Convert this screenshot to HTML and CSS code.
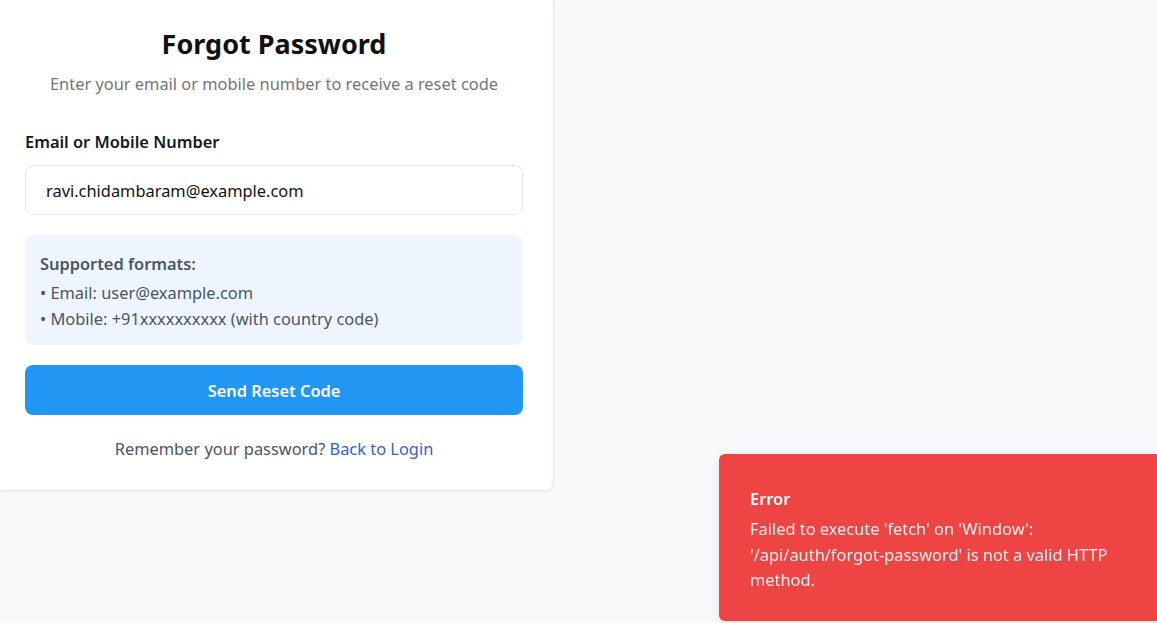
FILE: index.html
```html
<!DOCTYPE html>
<html lang="en">
<head>
<meta charset="utf-8">
<title>Forgot Password</title>
<link rel="stylesheet" href="styles.css">
</head>
<body>
<main class="page">
  <section class="card">
    <h1 class="title">Forgot Password</h1>
    <p class="subtitle">Enter your email or mobile number to receive a reset code</p>
    <form class="form">
      <label class="label" for="ident">Email or Mobile Number</label>
      <input class="input" id="ident" type="text" value="ravi.chidambaram@example.com">
      <div class="info">
        <p class="info-title">Supported formats:</p>
        <p class="info-line">• Email: user@example.com</p>
        <p class="info-line">• Mobile: +91xxxxxxxxxx (with country code)</p>
      </div>
      <button class="btn" type="button">Send Reset Code</button>
    </form>
    <p class="footer">Remember your password? <a class="link" href="#">Back to Login</a></p>
  </section>
</main>
<div class="toast" role="alert">
  <div class="toast-title">Error</div>
  <div class="toast-desc">Failed to execute 'fetch' on 'Window': '/api/auth/forgot-password' is not a valid HTTP method.</div>
</div>
</body>
</html>
```

FILE: styles.css
```css
* { box-sizing: border-box; }
html, body { margin: 0; padding: 0; }
body {
  background: #f8f9fb;
  font-family: "Noto Sans", "Open Sans", Roboto, sans-serif;
  font-size: 16.4px;
  color: #111827;
  width: 1157px;
  height: 623px;
  overflow: hidden;
}
.page {
  display: flex;
  align-items: flex-start;
}
.card {
  width: 560px;
  margin-left: -6px;
  margin-top: -5px;
  background: #fff;
  border: 1px solid #e5e7eb;
  border-radius: 8px;
  box-shadow: 0 1px 3px rgba(0,0,0,0.06);
  padding: 30px 30px 29px 30px;
}
.title {
  margin: 0;
  text-align: center;
  font-size: 27px;
  line-height: 36px;
  font-weight: 700;
  color: #111;
}
.subtitle {
  margin: 10px 0 0;
  text-align: center;
  font-size: 16.4px;
  line-height: 24px;
  color: #757575;
}
.form {
  display: flex;
  flex-direction: column;
  margin-top: 34px;
}
.label {
  font-size: 16.4px;
  line-height: 24px;
  font-weight: 600;
  color: #111827;
}
.input {
  margin-top: 11px;
  height: 50px;
  border: 1px solid #e5e7eb;
  border-radius: 8px;
  padding: 0 20px;
  font: inherit;
  font-size: 16.4px;
  color: #111;
  background: #fff;
  outline: none;
}
.info {
  margin-top: 20px;
  background: #eef5ff;
  border-radius: 8px;
  padding: 17px 15px 13px;
}
.info p { margin: 0; }
.info-title {
  font-size: 16.4px;
  line-height: 24px;
  font-weight: 600;
  color: #4b5563;
  margin-bottom: 4px !important;
}
.info-line {
  font-size: 16.4px;
  line-height: 26px;
  color: #4b5563;
}
.btn {
  margin-top: 20px;
  height: 50px;
  border: 0;
  border-radius: 8px;
  background: #2196f3;
  color: #fff;
  font: inherit;
  font-size: 16.4px;
  font-weight: 600;
}
.footer {
  margin: 22px 0 0;
  text-align: center;
  font-size: 16.4px;
  line-height: 24px;
  color: #4b5563;
}
.link {
  color: #2f5fe8;
  text-decoration: none;
}
.toast {
  position: fixed;
  left: 719px;
  bottom: 2px;
  width: 460px;
  height: 167px;
  background: #ef4444;
  border-radius: 6px;
  padding: 33px 31px;
  color: #fff;
  box-shadow: 0 4px 12px rgba(0,0,0,0.1);
}
.toast-title {
  font-size: 16.4px;
  line-height: 24px;
  font-weight: 600;
}
.toast-desc {
  margin-top: 5px;
  font-size: 16.4px;
  line-height: 25.5px;
  opacity: 0.9;
}
```
